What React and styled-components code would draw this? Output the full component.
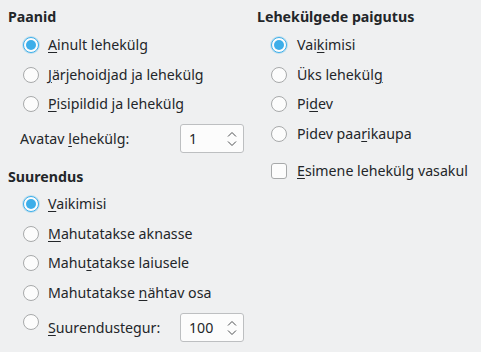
import React from "react";
import styled, { createGlobalStyle } from "styled-components";

const Global = createGlobalStyle`
  html, body { margin: 0; padding: 0; background: #eff0f1; }
  body { font-family: "Noto Sans", "DejaVu Sans", sans-serif; font-size: 14.2px; color: #232629; }
`;

const Page = styled.div`
  width: 481px;
  height: 352px;
  display: grid;
  grid-template-columns: 249px 1fr;
  padding-top: 7px;
  box-sizing: border-box;
  overflow: hidden;
`;

const Column = styled.div`
  display: flex;
  flex-direction: column;
  padding-left: ${(p) => p.$pl}px;
`;

const Heading = styled.div`
  font-weight: 700;
  height: 20px;
  line-height: 20px;
  margin-top: ${(p) => p.$mt || 0}px;
`;

const Group = styled.div`
  display: flex;
  flex-direction: column;
  margin-top: ${(p) => p.$mt || 0}px;
  padding-left: ${(p) => p.$pl}px;
`;

const Row = styled.div`
  display: flex;
  align-items: ${(p) => (p.$top ? "flex-start" : "center")};
  height: ${(p) => p.$h || 29.5}px;
  margin-top: ${(p) => p.$mt || 0}px;
  gap: ${(p) => p.$gap || 9}px;
`;

const RadioCircle = styled.span`
  width: 16px;
  height: 16px;
  box-sizing: border-box;
  border-radius: 50%;
  flex: none;
  background: #fcfcfc;
  border: 1px solid ${(p) => (p.$on ? "#3daee9" : "#a7a9aa")};
  display: flex;
  align-items: center;
  justify-content: center;
  margin-top: ${(p) => p.$mt || 0}px;
  box-shadow: ${(p) => (p.$on ? "0 0 0 1px rgba(61,174,233,0.25)" : "none")};
  &::after {
    content: "";
    display: ${(p) => (p.$on ? "block" : "none")};
    width: 10px;
    height: 10px;
    border-radius: 50%;
    background: #3daee9;
  }
`;

const CheckBox = styled.span`
  width: 16px;
  height: 16px;
  box-sizing: border-box;
  border-radius: 3px;
  flex: none;
  background: #fcfcfc;
  border: 1px solid #a7a9aa;
`;

const Label = styled.span`
  white-space: nowrap;
  line-height: 18px;
  align-self: center;
`;

const U = styled.span`
  text-decoration: underline;
  text-underline-offset: 2px;
`;

const SpinRow = styled.div`
  display: flex;
  align-items: center;
  margin-top: ${(p) => p.$mt || 0}px;
  padding-left: ${(p) => p.$pl || 0}px;
`;

const SpinLabel = styled.span`
  width: ${(p) => p.$w}px;
  white-space: nowrap;
`;

const SpinBox = styled.div`
  width: 64px;
  height: 29px;
  box-sizing: border-box;
  background: #fcfcfc;
  border: 1px solid #bdbfc1;
  border-radius: 3px;
  display: flex;
  align-items: center;
  justify-content: space-between;
  padding: 0 5px 0 8px;
`;

const Arrows = styled.svg`
  width: 12px;
  height: 20px;
`;

const Spin = ({ value }) => (
  <SpinBox>
    <span>{value}</span>
    <Arrows viewBox="0 0 12 20">
      <path d="M2 7.5 L6 3.5 L10 7.5" fill="none" stroke="#4d4f51" strokeWidth="1" />
      <path d="M2 12.5 L6 16.5 L10 12.5" fill="none" stroke="#4d4f51" strokeWidth="1" />
    </Arrows>
  </SpinBox>
);

const Radio = ({ on, children }) => (
  <Row>
    <RadioCircle $on={on} />
    <Label>{children}</Label>
  </Row>
);

export default function App() {
  return (
    <>
      <Global />
      <Page>
        <Column $pl={8}>
          <Heading>Paanid</Heading>
          <Group $mt={3.25} $pl={15}>
            <Radio on><U>A</U>inult lehekülg</Radio>
            <Radio><U>J</U>ärjehoidjad ja lehekülg</Radio>
            <Radio><U>P</U>isipildid ja lehekülg</Radio>
          </Group>
          <SpinRow $mt={5.25} $pl={12}>
            <SpinLabel $w={160}>Avatav <U>l</U>ehekülg:</SpinLabel>
            <Spin value="1" />
          </SpinRow>
          <Heading $mt={14}>Suurendus</Heading>
          <Group $mt={2.25} $pl={15}>
            <Radio on><U>V</U>aikimisi</Radio>
            <Radio><U>M</U>ahutatakse aknasse</Radio>
            <Radio>Mahu<U>t</U>atakse laiusele</Radio>
            <Radio>Mahutatakse <U>n</U>ähtav osa</Radio>
            <Row $top $h={29} $mt={6} $gap={9}>
              <RadioCircle $mt={1} />
              <SpinLabel $w={123} style={{ alignSelf: "center" }}><U>S</U>uurendustegur:</SpinLabel>
              <Spin value="100" />
            </Row>
          </Group>
        </Column>
        <Column $pl={8}>
          <Heading>Lehekülgede paigutus</Heading>
          <Group $mt={3.25} $pl={14}>
            <Row $gap={10}><RadioCircle $on /><Label>Vai<U>k</U>imisi</Label></Row>
            <Row $gap={10}><RadioCircle /><Label>Üks lehekül<U>g</U></Label></Row>
            <Row $gap={10}><RadioCircle /><Label>Pi<U>d</U>ev</Label></Row>
            <Row $gap={10}><RadioCircle /><Label>Pidev paa<U>r</U>ikaupa</Label></Row>
            <Row $gap={10} $mt={8}><CheckBox /><Label><U>E</U>simene lehekülg vasakul</Label></Row>
          </Group>
        </Column>
      </Page>
    </>
  );
}
